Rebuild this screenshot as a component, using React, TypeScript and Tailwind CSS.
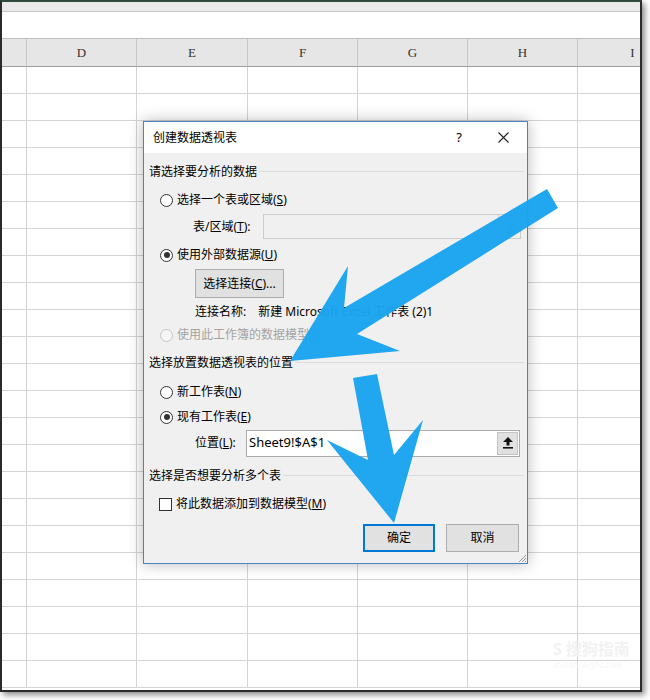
import React from 'react';

const font = "font-['Noto_Sans','Noto_Sans_CJK_SC',sans-serif]";
const cols = ['', 'D', 'E', 'F', 'G', 'H', 'I'];

const Radio = ({ checked, disabled }: { checked?: boolean; disabled?: boolean }) => (
  <span
    className={`w-[13px] h-[13px] rounded-full border flex items-center justify-center shrink-0 ${
      disabled ? 'border-[#c6c6c6] bg-[#f6f6f6]' : 'border-[#333] bg-white'
    }`}
  >
    {checked && <span className="w-[6px] h-[6px] rounded-full bg-[#333]" />}
  </span>
);

const UpIcon = ({ color }: { color: string }) => (
  <svg width="10" height="12" viewBox="0 0 10 12">
    <path d="M5 0 L10 5 L6.5 5 L6.5 8.5 L3.5 8.5 L3.5 5 L0 5 Z" fill={color} />
    <rect x="0" y="10" width="10" height="1.6" fill={color} />
  </svg>
);

const SectionLabel = ({ text }: { text: string }) => (
  <div className="flex items-center h-[24px]">
    <span>{text}</span>
    <span className="flex-1 h-px bg-[#dcdcdc] ml-[2px] mt-[-2px]" />
  </div>
);

const Dialog = () => (
  <div
    className={`absolute left-[143px] top-[121px] w-[385px] border border-[#4f81bd] shadow-[0_0_14px_rgba(0,0,0,0.28)] text-[12px] text-black ${font}`}
  >
    {/* title bar */}
    <div className="h-[31px] bg-white flex items-center pl-[9px]">
      <span>创建数据透视表</span>
      <span className="ml-auto w-[20px] text-center text-[13px]">?</span>
      <span className="ml-[24px] w-[20px] mr-[14px] flex items-center justify-center">
        <svg width="11" height="11" viewBox="0 0 11 11">
          <path d="M0.5 0.5 L10.5 10.5 M10.5 0.5 L0.5 10.5" stroke="#222" strokeWidth="1.1" />
        </svg>
      </span>
    </div>

    {/* body */}
    <div className="relative bg-[#f0f0f0] pl-[5px] pr-[3px] pt-[7px] pb-[11px]">
      <SectionLabel text="请选择要分析的数据" />

      <div className="mt-[4px] h-[24px] flex items-center pl-[11px] gap-[4px]">
        <Radio />
        <span>
          选择一个表或区域(<u>S</u>)
        </span>
      </div>

      <div className="mt-[2px] h-[25px] flex items-center pl-[44px]">
        <span className="w-[70px]">
          表/区域(<u>T</u>):
        </span>
        <div className="w-[258px] h-[25px] border border-[#cccccc] bg-[#f0f0f0] flex justify-end">
          <div className="w-[22px] h-full border-l border-[#d4d4d4] flex items-center justify-center">
            <UpIcon color="#b0b0b0" />
          </div>
        </div>
      </div>

      <div className="mt-[4px] h-[24px] flex items-center pl-[11px] gap-[4px]">
        <Radio checked />
        <span>
          使用外部数据源(<u>U</u>)
        </span>
      </div>

      <div className="mt-[2px] pl-[46px]">
        <button className="w-[89px] h-[29px] bg-[#e1e1e1] border border-[#adadad] flex items-center justify-center">
          选择连接(<u>C</u>)...
        </button>
      </div>

      <div className="mt-[3px] h-[22px] flex items-center pl-[46px]">
        <span>连接名称:</span>
        <span className="ml-[12px]">新建 Microsoft Excel 工作表 (2)1</span>
      </div>

      <div className="h-[24px] flex items-center pl-[11px] gap-[4px] text-[#a3a3a3]">
        <Radio disabled />
        <span>
          使用此工作簿的数据模型(<u>D</u>)
        </span>
      </div>

      <div className="mt-[4px]">
        <SectionLabel text="选择放置数据透视表的位置" />
      </div>

      <div className="mt-[5px] h-[24px] flex items-center pl-[11px] gap-[4px]">
        <Radio />
        <span>
          新工作表(<u>N</u>)
        </span>
      </div>

      <div className="mt-[1px] h-[24px] flex items-center pl-[11px] gap-[4px]">
        <Radio checked />
        <span>
          现有工作表(<u>E</u>)
        </span>
      </div>

      <div className="h-[28px] flex items-center pl-[46px]">
        <span className="w-[51px]">
          位置(<u>L</u>):
        </span>
        <div className="w-[274px] h-[27px] border border-[#ababab] bg-white flex items-center">
          <span className="pl-[2px] text-[13px]">Sheet9!$A$1</span>
          <div className="ml-auto mr-[1px] w-[21px] h-[23px] bg-[#e1e1e1] border border-[#c4c4c4] flex items-center justify-center">
            <UpIcon color="#111" />
          </div>
        </div>
      </div>

      <div className="mt-[7px]">
        <SectionLabel text="选择是否想要分析多个表" />
      </div>

      <div className="mt-[4px] h-[24px] flex items-center pl-[10px] gap-[4px]">
        <span className="w-[13px] h-[13px] border border-[#333] bg-white shrink-0" />
        <span>
          将此数据添加到数据模型(<u>M</u>)
        </span>
      </div>

      <div className="mt-[8px] flex justify-end gap-[11px] pr-[5px]">
        <button className="w-[72px] h-[28px] bg-[#e1e1e1] border-2 border-[#0078d7] flex items-center justify-center">
          确定
        </button>
        <button className="w-[73px] h-[28px] bg-[#e1e1e1] border border-[#adadad] flex items-center justify-center">
          取消
        </button>
      </div>

      {/* resize grip */}
      <svg className="absolute right-0 bottom-0" width="10" height="10" viewBox="0 0 10 10">
        <path d="M9 2 L2 9 M9 5 L5 9 M9 8 L8 9" stroke="#9a9a9a" strokeWidth="1" />
      </svg>
    </div>
  </div>
);

const Arrows = () => (
  <svg className="absolute left-0 top-0 pointer-events-none" width="650" height="700" viewBox="0 0 650 700">
    <polygon
      points="547,189 558,208 357,334 400,351 290,361 348,266 344,308"
      fill="#1aa4f0"
      fillOpacity="0.97"
    />
    <polygon
      points="353,378 377,374 394,455 423,420 394,523 327,440 368,460"
      fill="#1aa4f0"
      fillOpacity="0.97"
    />
  </svg>
);

export default function App() {
  return (
    <div className="relative w-[650px] h-[700px] bg-white overflow-hidden">
      {/* spreadsheet window */}
      <div className="w-[642px] h-[692px] border-2 border-t-[#2f4a3c] border-x-[#2a2a2a] border-b-[#2a2a2a] shadow-[3px_3px_6px_rgba(0,0,0,0.45)] overflow-hidden bg-white">
        <div className="h-[10px] bg-[#e9e9e9] border-b border-[#c6c6c6]" />
        <div className="h-[27px] bg-white border-b border-[#bdbdbd]" />
        <div className="h-[28px] bg-[#e6e6e6] border-b border-[#9f9f9f] grid grid-cols-[25px_110px_111px_110px_110px_110px_110px] w-[800px]">
          {cols.map((c, i) => (
            <div
              key={i}
              className="flex items-center justify-center border-r border-[#c8c8c8] font-['Liberation_Serif',serif] text-[13px] text-[#333]"
            >
              {c}
            </div>
          ))}
        </div>
        {Array.from({ length: 23 }).map((_, r) => (
          <div
            key={r}
            className="h-[27px] border-b border-[#d4d4d4] grid grid-cols-[25px_110px_111px_110px_110px_110px_110px] w-[800px]"
          >
            {cols.map((_, i) => (
              <div key={i} className="border-r border-[#d4d4d4]" />
            ))}
          </div>
        ))}
      </div>

      {/* faint watermark */}
      <div className="absolute left-[553px] top-[641px] flex flex-col items-start text-[#f2f2f2] font-['Noto_Sans','Noto_Sans_CJK_SC',sans-serif]">
        <div className="flex items-center gap-[4px] text-[16px] font-bold leading-none">
          <span>S</span>
          <span>搜狗指南</span>
        </div>
        <div className="text-[8px] mt-[4px] leading-none text-[#f6f6f6]">zhinan.sogou.com</div>
      </div>

      <Dialog />
      <Arrows />
    </div>
  );
}
